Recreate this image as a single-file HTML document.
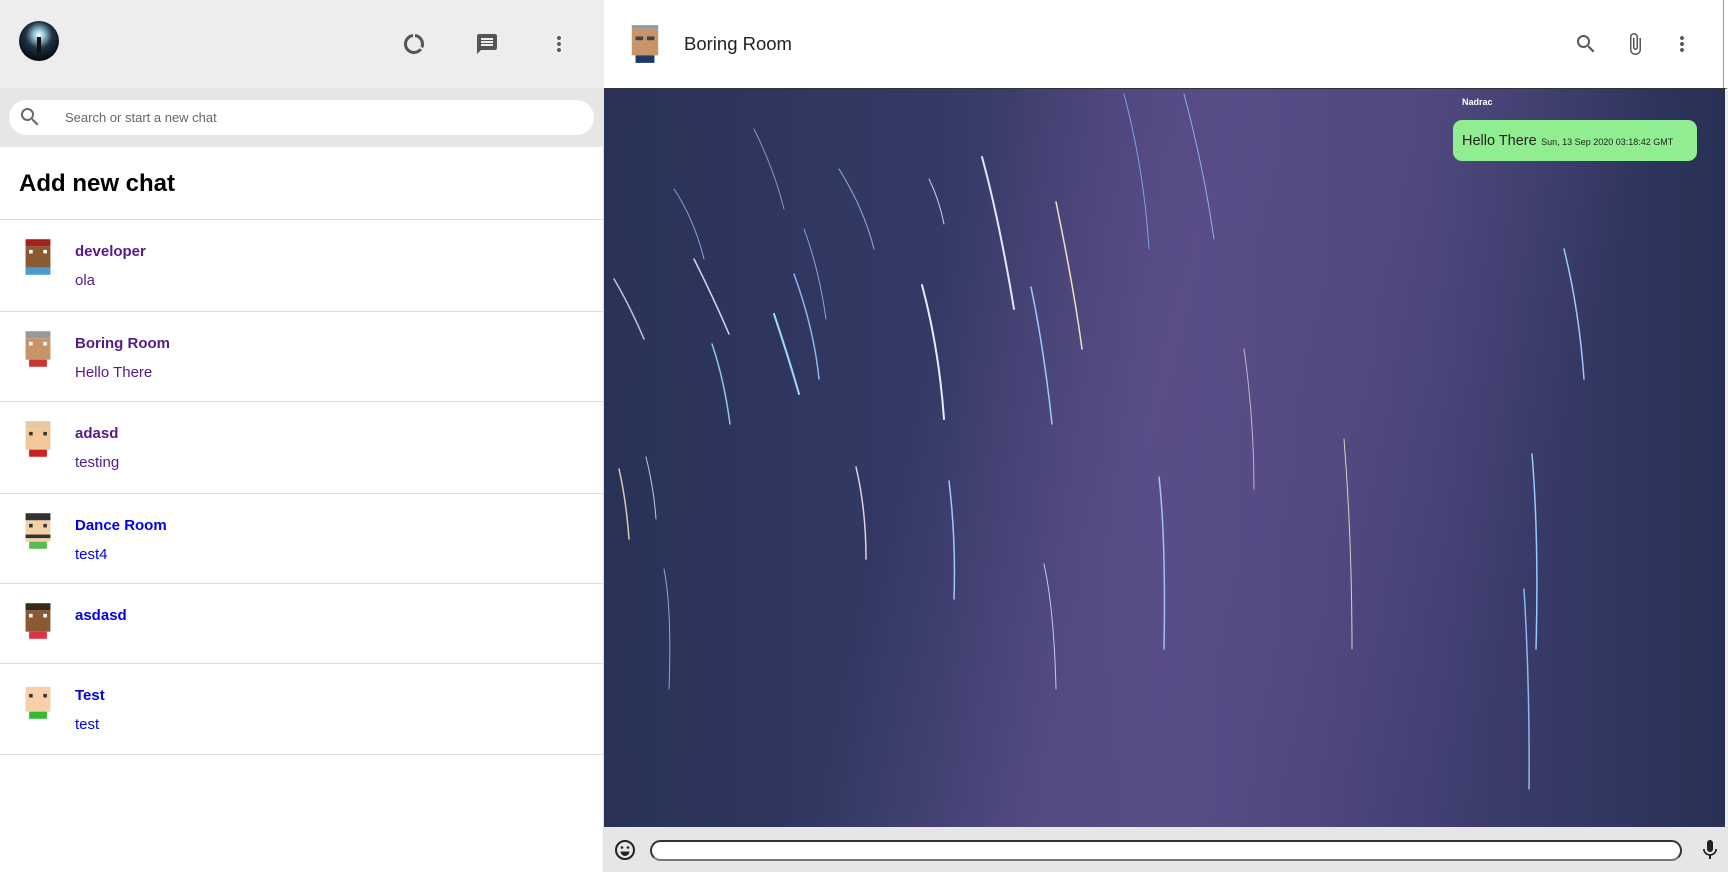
<!DOCTYPE html>
<html><head><meta charset="utf-8"><style>
*{margin:0;padding:0;box-sizing:border-box}
body{width:1728px;height:872px;overflow:hidden;font-family:"Liberation Sans",sans-serif;background:#fff;position:relative}
.left{position:absolute;left:0;top:0;width:604px;height:872px;background:#fff;border-right:1px solid #ddd}
.lh{position:absolute;left:0;top:0;width:604px;height:88px;background:#ededed}
.sb{position:absolute;left:0;top:88px;width:604px;height:59px;background:#e6e6e6}
.si{position:absolute;left:9px;top:12px;width:585px;height:35px;background:#fff;border-radius:18px}
.si span{position:absolute;left:56px;top:10px;font-size:13px;color:#666}
h2{position:absolute;left:19px;top:170px;font-size:24px;font-weight:bold;color:#000}
.row{position:absolute;left:0;width:604px;border-top:1px solid #ddd}
.row .av{position:absolute;left:22px;top:19px;width:32px;height:36px}
.row .n{position:absolute;left:75px;top:23px;font-size:15px;font-weight:bold}
.row .m{position:absolute;left:75px;top:52px;font-size:15px}
.p{color:#551a8b}.b{color:#0000ee}
.right{position:absolute;left:604px;top:0;width:1124px;height:872px}
.rh{position:absolute;left:0;top:0;width:1120px;height:88px;background:#fff;border-right:1px solid #999}
.bg{position:absolute;left:0;top:88px;width:1124px;height:739px;border-top:1px solid #333;border-right:3px solid #eee;overflow:hidden;
background:linear-gradient(105deg,rgba(0,0,0,0) 30%,rgba(100,85,145,.55) 48%,rgba(100,85,145,.45) 62%,rgba(0,0,0,0) 80%),linear-gradient(90deg,#293256 0%,#343a66 30%,#4d447a 50%,#3f3e70 75%,#283155 100%)}
.ft{position:absolute;left:0;top:827px;width:1124px;height:45px;background:#e6e6e6}
.inp{position:absolute;left:46px;top:13px;width:1032px;height:21px;background:#fff;border:2px solid #333;border-bottom-color:#777;border-radius:11px}
.bub{position:absolute;left:849px;top:31px;width:244px;height:41px;background:#90ee90;border-radius:9px;padding:12px 9px;white-space:nowrap}
</style></head><body>
<div class="left">
 <div class="lh">
  <svg style="position:absolute;left:19px;top:21px" width="40" height="40"><defs><radialGradient id="g" cx="50%" cy="35%" r="60%"><stop offset="0" stop-color="#fff"/><stop offset=".2" stop-color="#9cd"/><stop offset=".55" stop-color="#234"/><stop offset="1" stop-color="#051015"/></radialGradient></defs><circle cx="20" cy="20" r="20" fill="url(#g)"/><rect x="18" y="16" width="4" height="16" fill="#111"/></svg>
  <svg style="position:absolute;left:402px;top:32px" width="24" height="24" viewBox="0 0 24 24"><path fill="#555" d="M13 2.05v3.03c3.39.49 6 3.390 6 6.92 0 .9-.18 1.75-.48 2.54l2.6 1.53c.56-1.24.88-2.62.88-4.07 0-5.18-3.95-9.450-9-9.95zM12 19c-3.87 0-7-3.13-7-7 0-3.53 2.61-6.43 6-6.92V2.05c-5.06.5-9 4.76-9 9.95 0 5.52 4.47 10 9.99 10 3.31 0 6.24-1.61 8.06-4.09l-2.6-1.53C16.17 17.98 14.21 19 12 19z"/></svg>
  <svg style="position:absolute;left:475px;top:32px" width="24" height="24" viewBox="0 0 24 24"><path fill="#555" d="M20 2H4c-1.1 0-2 .9-2 2v18l4-4h14c1.1 0 2-.9 2-2V4c0-1.1-.9-2-2-2zm-2 12H6v-2h12v2zm0-3H6V9h12v2zm0-3H6V6h12v2z"/></svg>
  <svg style="position:absolute;left:547px;top:32px" width="24" height="24" viewBox="0 0 24 24"><path fill="#555" d="M12 8c1.1 0 2-.9 2-2s-.9-2-2-2-2 .9-2 2 .9 2 2 2zm0 2c-1.1 0-2 .9-2 2s.9 2 2 2 2-.9 2-2-.9-2-2-2zm0 6c-1.1 0-2 .9-2 2s.9 2 2 2 2-.9 2-2-.9-2-2-2z"/></svg>
 </div>
 <div class="sb"><div class="si">
  <svg style="position:absolute;left:9px;top:5px" width="24" height="24" viewBox="0 0 24 24"><path fill="#666" d="M15.5 14h-.79l-.28-.27A6.47 6.47 0 0016 9.5 6.5 6.5 0 109.5 16c1.61 0 3.09-.59 4.23-1.57l.27.28v.79l5 4.99L20.49 19l-4.99-5zm-6 0C7.01 14 5 11.990 5 9.5S7.01 5 9.5 5 14 7.01 14 9.5 11.99 14 9.5 14z"/></svg>
  <span>Search or start a new chat</span></div></div>
 <h2>Add new chat</h2>
 <div class="row" style="top:219px;height:92px"><svg class="av" viewBox="0 0 9 10"><rect x="1" y="0" width="7" height="2" fill="#a52020"/><rect x="1" y="2" width="7" height="6" fill="#8a5a35"/><rect x="2" y="3" width="1" height="1" fill="#fff"/><rect x="6" y="3" width="1" height="1" fill="#fff"/><rect x="1" y="8" width="7" height="2" fill="#4a9ad0"/></svg><div class="n p">developer</div><div class="m p">ola</div></div>
 <div class="row" style="top:311px;height:90px"><svg class="av" viewBox="0 0 9 10"><rect x="1" y="0" width="7" height="2" fill="#999"/><rect x="1" y="2" width="7" height="6" fill="#c8956a"/><rect x="2" y="3" width="1" height="1" fill="#fff"/><rect x="6" y="3" width="1" height="1" fill="#fff"/><rect x="2" y="8" width="5" height="2" fill="#c33"/></svg><div class="n p">Boring Room</div><div class="m p">Hello There</div></div>
 <div class="row" style="top:401px;height:92px"><svg class="av" viewBox="0 0 9 10"><rect x="1" y="0" width="7" height="2" fill="#e8c8a0"/><rect x="1" y="2" width="7" height="6" fill="#f2c89a"/><rect x="2" y="3" width="1" height="1" fill="#333"/><rect x="6" y="3" width="1" height="1" fill="#333"/><rect x="2" y="8" width="5" height="2" fill="#c22"/></svg><div class="n p">adasd</div><div class="m p">testing</div></div>
 <div class="row" style="top:493px;height:90px"><svg class="av" viewBox="0 0 9 10"><rect x="1" y="0" width="7" height="2" fill="#333"/><rect x="1" y="2" width="7" height="6" fill="#f2d0a8"/><rect x="2" y="3" width="1" height="1" fill="#333"/><rect x="6" y="3" width="1" height="1" fill="#333"/><rect x="1" y="6" width="7" height="1" fill="#333"/><rect x="2" y="8" width="5" height="2" fill="#5b5"/></svg><div class="n b">Dance Room</div><div class="m b">test4</div></div>
 <div class="row" style="top:583px;height:80px"><svg class="av" viewBox="0 0 9 10"><rect x="1" y="0" width="7" height="2" fill="#3a2a1a"/><rect x="1" y="2" width="7" height="6" fill="#8a5a35"/><rect x="2" y="3" width="1" height="1" fill="#fff"/><rect x="6" y="3" width="1" height="1" fill="#fff"/><rect x="2" y="8" width="5" height="2" fill="#d34"/></svg><div class="n b">asdasd</div></div>
 <div class="row" style="top:663px;height:92px;border-bottom:1px solid #ddd"><svg class="av" viewBox="0 0 9 10"><rect x="1" y="1" width="7" height="7" fill="#f5d0a8"/><rect x="2" y="3" width="1" height="1" fill="#333"/><rect x="6" y="3" width="1" height="1" fill="#333"/><rect x="2" y="8" width="5" height="2" fill="#3b3"/></svg><div class="n b">Test</div><div class="m b">test</div></div>
</div>
<div class="right">
 <div class="rh">
  <svg style="position:absolute;left:24px;top:25px;width:34px;height:38px" viewBox="0 0 9 10"><rect x="1" y="1" width="7" height="7" fill="#c8956a"/><rect x="1" y="0" width="7" height="1" fill="#999"/><rect x="2" y="3" width="2" height="1" fill="#444"/><rect x="5" y="3" width="2" height="1" fill="#444"/><rect x="2" y="8" width="5" height="2" fill="#1a3a6a"/></svg>
  <div style="position:absolute;left:80px;top:33px;font-size:18.5px;color:#222">Boring Room</div>
  <svg style="position:absolute;left:970px;top:32px" width="24" height="24" viewBox="0 0 24 24"><path fill="#555" d="M15.5 14h-.79l-.28-.27A6.47 6.47 0 0016 9.5 6.5 6.5 0 109.5 16c1.61 0 3.09-.59 4.23-1.57l.27.28v.79l5 4.99L20.49 19l-4.99-5zm-6 0C7.01 14 5 11.99 5 9.5S7.01 5 9.5 5 14 7.01 14 9.5 11.99 14 9.5 14z"/></svg>
  <svg style="position:absolute;left:1019px;top:31px" width="24" height="26" viewBox="0 0 24 24"><path fill="#555" d="M16.5 6v11.5c0 2.21-1.79 4-4 4s-4-1.790-4-4V5a2.5 2.5 0 015 0v10.5c0 .55-.45 1-1 1s-1-.45-1-1V6H10v9.5a2.5 2.5 0 005 0V5c0-2.21-1.79-4-4-4S7 2.79 7 5v12.5c0 3.04 2.46 5.5 5.5 5.5s5.5-2.46 5.5-5.5V6h-1.5z"/></svg>
  <svg style="position:absolute;left:1066px;top:32px" width="24" height="24" viewBox="0 0 24 24"><path fill="#555" d="M12 8c1.1 0 2-.9 2-2s-.9-2-2-2-2 .9-2 2 .9 2 2 2zm0 2c-1.1 0-2 .9-2 2s.9 2 2 2 2-.9 2-2-.9-2-2-2zm0 6c-1.1 0-2 .9-2 2s.9 2 2 2 2-.9 2-2-.9-2-2-2z"/></svg>
 </div>
 <div class="bg">
  <svg width="1124" height="739" style="position:absolute;left:0;top:0">
   <g fill="none" stroke-linecap="round">
    <path d="M10 190 Q25 215 40 250" stroke="#c8c0d8" stroke-width="1.5"/>
    <path d="M90 170 Q110 210 125 245" stroke="#d0d8f0" stroke-width="1.5"/>
    <path d="M108 255 Q120 290 126 335" stroke="#8ac8f0" stroke-width="1.5"/>
    <path d="M170 225 Q185 270 195 305" stroke="#a0d8ff" stroke-width="2"/>
    <path d="M190 185 Q210 240 215 290" stroke="#8ab8f0" stroke-width="1.5"/>
    <path d="M318 196 Q335 260 340 330" stroke="#e0f0ff" stroke-width="2"/>
    <path d="M378 68 Q395 130 410 220" stroke="#e0e8ff" stroke-width="2"/>
    <path d="M452 113 Q470 200 478 260" stroke="#f0e0c0" stroke-width="1.5"/>
    <path d="M427 198 Q440 260 448 335" stroke="#9ac8ff" stroke-width="1.5"/>
    <path d="M325 90 Q335 110 340 135" stroke="#c8d0f0" stroke-width="1"/>
    <path d="M15 380 Q22 410 25 450" stroke="#e0c8b0" stroke-width="1.5"/>
    <path d="M42 368 Q50 400 52 430" stroke="#c0c8e0" stroke-width="1"/>
    <path d="M252 378 Q262 420 262 470" stroke="#e0d0e0" stroke-width="1.5"/>
    <path d="M345 392 Q352 450 350 510" stroke="#a0c8ff" stroke-width="1.5"/>
    <path d="M555 388 Q562 450 560 560" stroke="#a0c0ff" stroke-width="1.5"/>
    <path d="M440 475 Q450 520 452 600" stroke="#c0c8ff" stroke-width="1"/>
    <path d="M200 140 Q215 180 222 230" stroke="#8aa0e0" stroke-width="1"/>
    <path d="M70 100 Q90 130 100 170" stroke="#8aa0d8" stroke-width="1"/>
    <path d="M520 5 Q540 80 545 160" stroke="#7aa0e8" stroke-width="1"/>
    <path d="M580 5 Q600 80 610 150" stroke="#8ab0f0" stroke-width="1"/>
    <path d="M960 160 Q975 220 980 290" stroke="#9ac8ff" stroke-width="1.5"/>
    <path d="M928 365 Q935 450 932 560" stroke="#9ac8ff" stroke-width="1.5"/>
    <path d="M920 500 Q926 600 925 700" stroke="#8ab8f0" stroke-width="1.5"/>
    <path d="M740 350 Q748 450 748 560" stroke="#e0d0c0" stroke-width="1"/>
    <path d="M640 260 Q650 330 650 400" stroke="#c8b0d0" stroke-width="1"/>
    <path d="M235 80 Q260 120 270 160" stroke="#8ab0e0" stroke-width="1"/>
    <path d="M60 480 Q68 520 65 600" stroke="#8aa8e0" stroke-width="1"/>
    <path d="M150 40 Q170 80 180 120" stroke="#9090c0" stroke-width="1"/>
   </g>
  </svg>
  <div style="position:absolute;left:858px;top:8px;font-size:9px;font-weight:bold;color:#fff">Nadrac</div>
  <div class="bub"><span style="font-size:14.5px;color:#222">Hello There</span> <span style="font-size:9px;color:#222">Sun, 13 Sep 2020 03:18:42 GMT</span></div>
 </div>
 <div class="ft">
  <svg style="position:absolute;left:9px;top:11px" width="24" height="24" viewBox="0 0 24 24"><circle cx="12" cy="12" r="9" fill="none" stroke="#222" stroke-width="2"/><circle cx="9" cy="9.5" r="1.3" fill="#222"/><circle cx="15" cy="9.5" r="1.3" fill="#222"/><path d="M7.5 13.5h9a4.5 4.5 0 01-9 0z" fill="#222"/></svg>
  <div class="inp"></div>
  <svg style="position:absolute;left:1094px;top:11px" width="24" height="24" viewBox="0 0 24 24"><path fill="#222" d="M12 14c1.66 0 3-1.34 3-3V5c0-1.66-1.34-3-3-3S9 3.34 9 5v6c0 1.66 1.34 3 3 3zm5.3-3c0 3-2.54 5.1-5.3 5.1S6.7 14 6.7 11H5c0 3.41 2.72 6.23 6 6.72V21h2v-3.28c3.28-.48 6-3.3 6-6.720h-1.7z"/></svg>
 </div>
</div>
</body></html>
